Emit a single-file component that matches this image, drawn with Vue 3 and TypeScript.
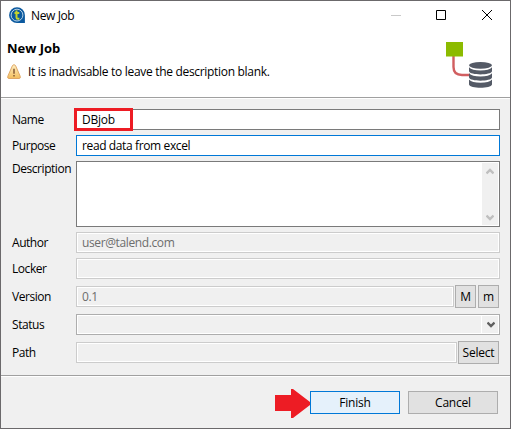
<script setup lang="ts">
import { ref } from 'vue'

const name = ref('DBjob')
const purpose = ref('read data from excel')
const author = ref('user@talend.com')
const version = ref('0.1')
</script>

<template>
  <div class="window">
    <header class="titlebar">
      <svg class="app-icon" width="17" height="17" viewBox="0 0 17 17">
        <path d="M8 0.3A7.9 7.9 0 1 0 8 16.1H15.9V8.2A7.9 7.9 0 0 0 8 .3Z" fill="#0b599f" />
        <circle cx="8" cy="8.1" r="5.9" fill="none" stroke="#b9d3e4" stroke-width="1" />
        <path d="M7.5 3.6V10.2Q7.5 11.7 8.9 11.7H10.4M5.5 6.1H10.3" fill="none" stroke="#c5d32b" stroke-width="2" />
      </svg>
      <span class="caption">New Job</span>
      <div class="controls">
        <svg width="102" height="12" viewBox="0 0 102 12">
          <path d="M0 6.5H10" stroke="#c9c9c9" fill="none" />
          <path d="M45.5 1.5H54.5V10.5H45.5Z" stroke="#000" fill="none" />
          <path d="M91 1L101 11M101 1L91 11" stroke="#000" fill="none" />
        </svg>
      </div>
    </header>

    <section class="banner">
      <div class="banner-text">
        <h1>New Job</h1>
        <p>
          <svg width="14" height="16" viewBox="0 0 14 16">
            <defs>
              <linearGradient id="warn" x1="0" y1="0" x2="0" y2="1">
                <stop offset="0" stop-color="#fff0c4" />
                <stop offset="1" stop-color="#f3bd5c" />
              </linearGradient>
            </defs>
            <path d="M5.5 1.5Q7 -.2 8.5 1.5L13.2 12.3Q13.8 14.5 12 14.5H2Q.2 14.5 .8 12.3Z" fill="url(#warn)" stroke="#dfa765" />
            <path d="M7 4.8V9.8M7 11V12.6" stroke="#855a35" stroke-width="1.5" />
          </svg>
          <span>It is inadvisable to leave the description blank.</span>
        </p>
      </div>
      <svg class="job-icon" width="48" height="48" viewBox="0 0 48 48">
        <path d="M8.5 14V25Q8.5 33 17 33H25" fill="none" stroke="#d15e60" stroke-width="2.4" />
        <rect x="1" y="0" width="17" height="14.5" fill="#8cbb00" />
        <g fill="#545a66">
          <ellipse cx="35.5" cy="23.3" rx="11.5" ry="3.4" />
          <path d="M24 25.3Q27 28.5 35.5 28.5T47 25.3V29.3C46 33.5 25 33.5 24 29.3Z" />
          <path d="M24 31.2Q27 34.4 35.5 34.4T47 31.2V35.6C46 39.8 25 39.8 24 35.6Z" />
          <path d="M24 37.5Q27 40.7 35.5 40.7T47 37.5V42.5C46 46.9 25 46.9 24 42.5Z" />
        </g>
      </svg>
    </section>

    <main class="form">
      <label>Name</label>
      <div class="field name">{{ name }}<div class="highlight"></div></div>

      <label>Purpose</label>
      <div class="field focused">{{ purpose }}</div>

      <label class="top-label">Description</label>
      <div class="field area">
        <div class="scrollbar">
          <svg width="8" height="7" viewBox="0 0 8 7"><path d="M.5 5.5L4 2L7.5 5.5" /></svg>
          <svg width="8" height="7" viewBox="0 0 8 7"><path d="M.5 1.5L4 5L7.5 1.5" /></svg>
        </div>
      </div>

      <label>Author</label>
      <div class="field disabled">{{ author }}</div>

      <label>Locker</label>
      <div class="field disabled"></div>

      <label>Version</label>
      <div class="line">
        <div class="field disabled">{{ version }}</div>
        <button class="btn small">M</button>
        <button class="btn small minor">m</button>
      </div>

      <label>Status</label>
      <div class="field disabled combo">
        <div class="drop">
          <svg width="8" height="7" viewBox="0 0 8 7"><path d="M.5 1.5L4 5L7.5 1.5" /></svg>
        </div>
      </div>

      <label>Path</label>
      <div class="line">
        <div class="field disabled"></div>
        <button class="btn select">Select</button>
      </div>
    </main>

    <footer class="actions">
      <svg class="arrow" width="35" height="29" viewBox="0 0 35 29">
        <path d="M0 6H16V0H18L35 13V16L18 29H16V22H0Z" fill="#ed1c24" />
      </svg>
      <button class="btn wide primary">Finish</button>
      <button class="btn wide">Cancel</button>
    </footer>
  </div>
</template>

<style>
body {
  margin: 0;
  overflow: hidden;
}
</style>

<style scoped>
* {
  box-sizing: border-box;
}
.window {
  width: 511px;
  height: 429px;
  display: flex;
  flex-direction: column;
  border: 1px solid #6b696b;
  background: #f0f0f0;
  color: #000;
  font: 12px/16px "Open Sans", "Noto Sans", sans-serif;
  letter-spacing: -0.38px;
  white-space: nowrap;
}
.titlebar {
  height: 30px;
  flex: none;
  display: flex;
  align-items: center;
  background: #fff;
  padding: 0 17px 0 8px;
}
.app-icon {
  margin-top: -2px;
}
.caption {
  margin-left: 5px;
}
.controls {
  margin-left: auto;
  height: 12px;
  display: flex;
  margin-top: -2px;
}
.banner {
  height: 66px;
  flex: none;
  display: flex;
  justify-content: space-between;
  background: #fff;
  padding: 9px 17px 0 6px;
}
h1 {
  margin: 0;
  font-size: 13px;
  line-height: 16px;
  letter-spacing: 0;
}
p {
  margin: 8px 0 0;
  display: flex;
  height: 16px;
}
p span {
  margin-left: 7px;
  line-height: 15px;
  letter-spacing: -0.31px;
}
.job-icon {
  margin-top: 2px;
}
.form {
  height: 278px;
  flex: none;
  border-top: 1px solid #a0a0a0;
  box-shadow: inset 0 1px #fff;
  padding: 11px 10px 0 11px;
  display: grid;
  grid-template-columns: 64px 424px;
  grid-template-rows: 21px 21px 66px 21px 22px 24px 22px 23px;
  row-gap: 5px;
  align-content: start;
  align-items: start;
}
.form label {
  line-height: 21px;
  letter-spacing: -0.45px;
}
.form label:nth-of-type(6),
.form label:nth-of-type(8) {
  line-height: 23px;
}
.form .top-label {
  line-height: 16px;
}
.field {
  position: relative;
  height: 21px;
  border: 1px solid #7a7a7a;
  background: #fff;
  padding-left: 5px;
  line-height: 20px;
}
.name {
  letter-spacing: -0.25px;
}
.focused {
  border-color: #0078d7;
}
.area {
  height: 66px;
  display: flex;
  justify-content: flex-end;
  padding: 1px;
}
.disabled {
  border-color: #ccc;
  background: #f0f0f0;
  box-shadow: inset 0 0 0 1px #fff;
  color: #6d6d6d;
}
.highlight {
  position: absolute;
  left: -3px;
  top: -2px;
  width: 59px;
  height: 23px;
  border: 3px solid #ed1c24;
}
.scrollbar {
  width: 16px;
  background: #f0f0f0;
  display: flex;
  flex-direction: column;
  align-items: center;
  justify-content: space-between;
  padding: 5px 0 4px;
}
.scrollbar path,
.drop path {
  fill: none;
  stroke: #bfbfbf;
  stroke-width: 2.4;
}
.drop path {
  stroke: #606060;
}
.line {
  display: flex;
  align-items: center;
  padding-right: 1px;
}
.line .field {
  flex: 1;
  margin-right: 1px;
}
.combo {
  border-color: #adadad;
  display: flex;
  justify-content: flex-end;
}
.drop {
  width: 18px;
  border-left: 1px solid #fff;
  display: flex;
  align-items: center;
  justify-content: center;
}
.btn {
  height: 23px;
  margin: 0;
  padding: 0;
  border: 1px solid #adadad;
  background: #e1e1e1;
  color: #000;
  font: inherit;
  letter-spacing: -0.2px;
  line-height: 21px;
}
.small {
  width: 21px;
}
.minor {
  margin-left: 2px;
}
.select {
  width: 41px;
}
.wide {
  width: 90px;
}
.primary {
  border-color: #0078d7;
  background: #e5f1fb;
}
.actions {
  flex: 1;
  display: flex;
  justify-content: flex-end;
  gap: 8px;
  border-top: 1px solid #a0a0a0;
  box-shadow: inset 0 1px #fff;
  padding: 15px 12px 0 0;
}
.arrow {
  margin: -2px -8px 0 0;
}
</style>
